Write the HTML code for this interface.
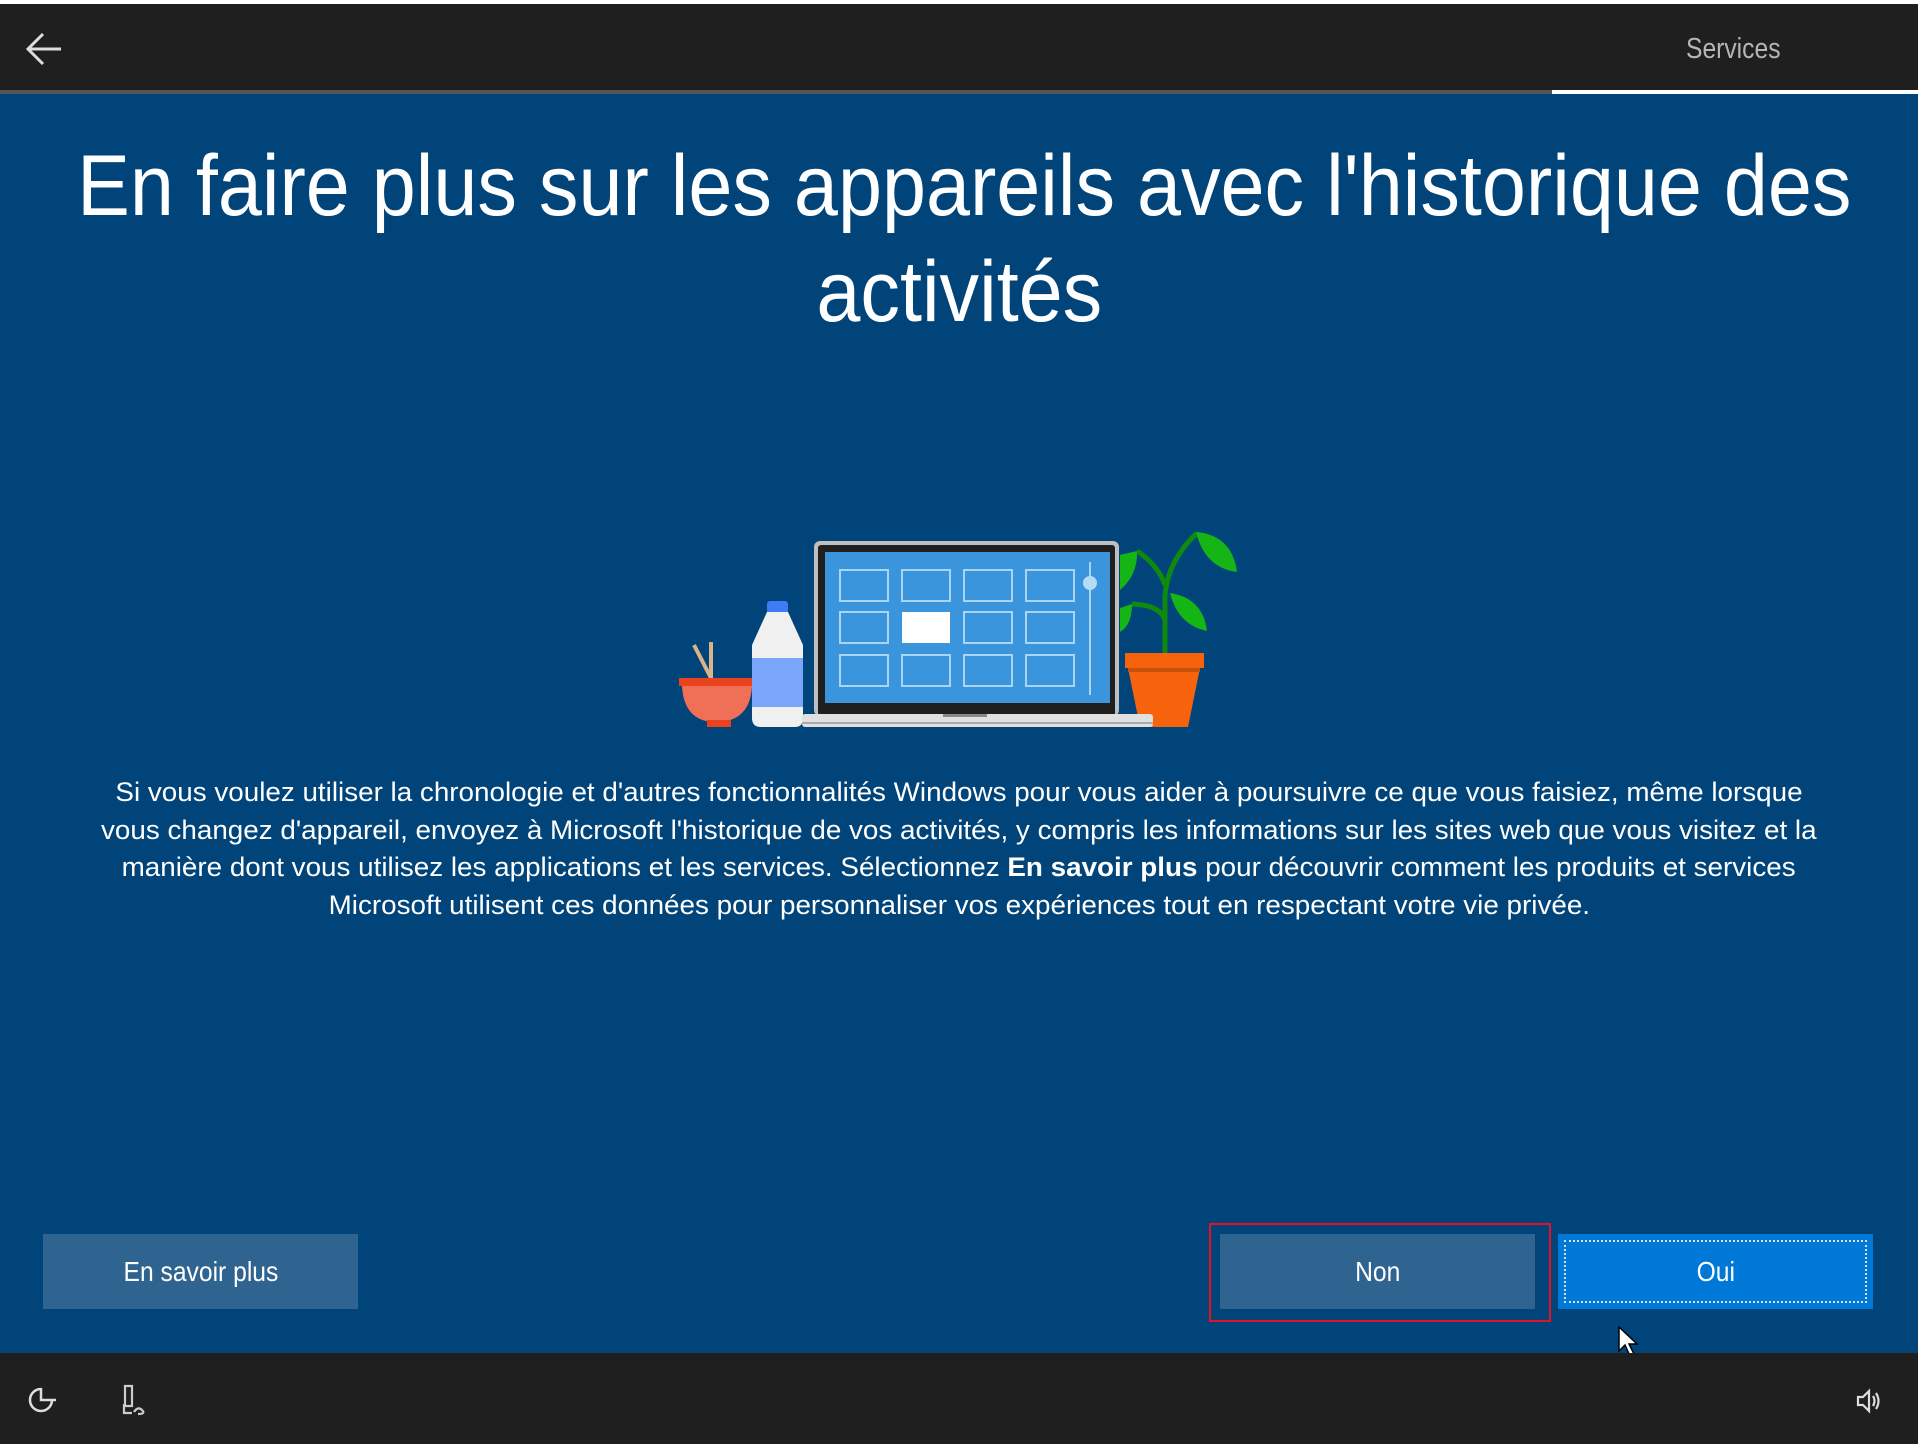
<!DOCTYPE html>
<html><head><meta charset="utf-8"><style>
*{margin:0;padding:0;box-sizing:border-box}
body{width:1921px;height:1446px;background:#fff;position:relative;overflow:hidden;font-family:"Liberation Sans",sans-serif}
.main{position:absolute;left:0;top:4px;width:1918px;height:1440px;background:#00447a}
.top{position:absolute;left:0;top:4px;width:1918px;height:86px;background:#1f1f1f}
.line1{position:absolute;left:0;top:90px;width:1552px;height:4px;background:#555}
.line2{position:absolute;left:1552px;top:90px;width:366px;height:4px;background:#fff}
.svc{position:absolute;left:1686px;top:33px;font-size:29px;color:#b5b5b5;transform:scaleX(.85);transform-origin:left}
.title{position:absolute;left:0;width:1918px;text-align:center;color:#fff;font-size:86px;white-space:nowrap}
.title span{display:inline-block;transform:scaleX(.92)}
.body{position:absolute;left:0;width:1918px;text-align:center;color:#fff;font-size:27px;white-space:nowrap}
.body span{display:inline-block;transform:scaleX(1.03)}
.btn{position:absolute;top:1234px;height:75px;color:#fff;font-size:28px;display:flex;align-items:center;justify-content:center}
.bot{position:absolute;left:0;top:1353px;width:1918px;height:91px;background:#1f1f1f}
</style></head><body>
<div class="main"></div>
<div class="top"></div>
<div class="line1"></div><div class="line2"></div>
<svg style="position:absolute;left:24px;top:31px" width="40" height="36" viewBox="0 0 40 36"><path d="M19 3 L4 18 L19 33 M4 18 H37" stroke="#ddd" stroke-width="3" fill="none"/></svg>
<div class="svc">Services</div>
<div class="title" style="top:133px;line-height:106px"><span>En faire plus sur les appareils avec l'historique des</span></div>
<div class="title" style="top:239px;line-height:106px"><span>activités</span></div>

<svg style="position:absolute;left:0;top:0" width="1921" height="800">
 <path d="M694 645 L712 680 M711 642 L711 680" stroke="#d9b48a" stroke-width="4"/>
 <rect x="679" y="678" width="75" height="8" fill="#e8421f"/>
 <path d="M682 686 H752 Q750 722 716 722 Q684 722 682 686Z" fill="#ef6f57"/>
 <rect x="707" y="720" width="24" height="7" fill="#e8421f"/>
 <rect x="767" y="601" width="21" height="14" rx="3" fill="#3e7bf7"/>
 <path d="M767 612 H788 L803 645 V718 Q803 727 795 727 H761 Q752 727 752 718 V645Z" fill="#f0f0f0"/>
 <rect x="752" y="658" width="51" height="49" fill="#79a6f9"/>
 <rect x="814" y="541" width="305" height="175" rx="6" fill="#bfbfbf"/>
 <rect x="818" y="545" width="297" height="171" rx="3" fill="#1f1f1f"/>
 <rect x="825" y="552" width="285" height="151" fill="#3b95dc"/>
 <g fill="none" stroke="#a8d4f5" stroke-width="2">
  <rect x="840" y="570" width="48" height="31"/><rect x="902" y="570" width="48" height="31"/><rect x="964" y="570" width="48" height="31"/><rect x="1026" y="570" width="48" height="31"/>
  <rect x="840" y="612" width="48" height="31"/><rect x="964" y="612" width="48" height="31"/><rect x="1026" y="612" width="48" height="31"/>
  <rect x="840" y="655" width="48" height="31"/><rect x="902" y="655" width="48" height="31"/><rect x="964" y="655" width="48" height="31"/><rect x="1026" y="655" width="48" height="31"/>
 </g>
 <rect x="902" y="612" width="48" height="31" fill="#fff"/>
 <line x1="1090" y1="562" x2="1090" y2="695" stroke="#a8d4f5" stroke-width="2"/>
 <circle cx="1090" cy="583" r="7" fill="#b5dcf5"/>
 <g stroke="#0e8a0e" stroke-width="5" fill="none">
  <path d="M1165 655 V595 Q1168 560 1197 533"/>
  <path d="M1165 620 Q1160 605 1132 604"/>
  <path d="M1165 585 Q1158 565 1137 551"/>
 </g>
 <path d="M1196 532 Q1232 535 1237 572 Q1205 568 1196 532Z" fill="#14b514"/>
 <path d="M1170 593 Q1203 598 1207 631 Q1178 625 1170 593Z" fill="#14b514"/>
 <path d="M1137 551 Q1138 575 1120 590 L1120 555Z" fill="#14b514"/>
 <path d="M1132 604 Q1132 625 1120 632 L1120 608Z" fill="#14b514"/>
 <path d="M1128 668 H1200 L1188 727 H1140Z" fill="#f7630c"/>
 <rect x="1125" y="653" width="79" height="15" fill="#f7630c"/>
 <rect x="1128" y="668" width="72" height="4" fill="#c8500a"/>
 <rect x="802" y="714" width="351" height="13" rx="3" fill="#e0e0e0"/>
 <rect x="802" y="722" width="351" height="2" fill="#aaa"/>
 <rect x="943" y="714" width="44" height="3" fill="#888"/>
</svg>

<div class="body" style="top:774px;line-height:37.5px">
<span>Si vous voulez utiliser la chronologie et d'autres fonctionnalités Windows pour vous aider à poursuivre ce que vous faisiez, même lorsque</span><br>
<span>vous changez d'appareil, envoyez à Microsoft l'historique de vos activités, y compris les informations sur les sites web que vous visitez et la</span><br>
<span>manière dont vous utilisez les applications et les services. Sélectionnez <b>En savoir plus</b> pour découvrir comment les produits et services</span><br>
<span>Microsoft utilisent ces données pour personnaliser vos expériences tout en respectant votre vie privée.</span>
</div>

<div class="btn" style="left:43px;width:315px;background:#2f6491"><span style="transform:scaleX(.88);display:inline-block">En savoir plus</span></div>
<div style="position:absolute;left:1209px;top:1223px;width:342px;height:99px;border:2px solid #e81123"></div>
<div class="btn" style="left:1220px;width:315px;background:#2f6491"><span style="transform:scaleX(.88);display:inline-block">Non</span></div>
<div class="btn" style="left:1558px;width:315px;background:#0078d7"><span style="transform:scaleX(.88);display:inline-block">Oui</span><div style="position:absolute;left:6px;top:6px;right:6px;bottom:6px;border:2px dotted #ddd"></div></div>
<svg style="position:absolute;left:1618px;top:1326px" width="24" height="34" viewBox="0 0 24 34"><path d="M1 1 V25 L7 19 L12 30 L16 28 L11 18 H19Z" fill="#fff" stroke="#000" stroke-width="1.5"/></svg>

<div class="bot"></div>
<svg style="position:absolute;left:26px;top:1385px" width="34" height="32" viewBox="0 0 34 32"><path d="M15 4 A11 11 0 1 0 26 15" stroke="#ddd" stroke-width="2.5" fill="none"/><path d="M15 3 V15 H30" stroke="#ddd" stroke-width="2.5" fill="none"/></svg>
<svg style="position:absolute;left:120px;top:1384px" width="30" height="34" viewBox="0 0 30 34"><path d="M5 2 H12 V22 H5Z M4 20 V29 H12 M14 28 Q18 22 22 26 Q26 30 18 30" stroke="#ccc" stroke-width="2.2" fill="none"/></svg>
<svg style="position:absolute;left:1855px;top:1388px" width="28" height="26" viewBox="0 0 28 26"><path d="M3 9 H8 L14 3 V23 L8 17 H3Z M18 8 Q21 13 18 18 M21 5 Q26 13 21 21" stroke="#ddd" stroke-width="2.2" fill="none"/></svg>
</body></html>
